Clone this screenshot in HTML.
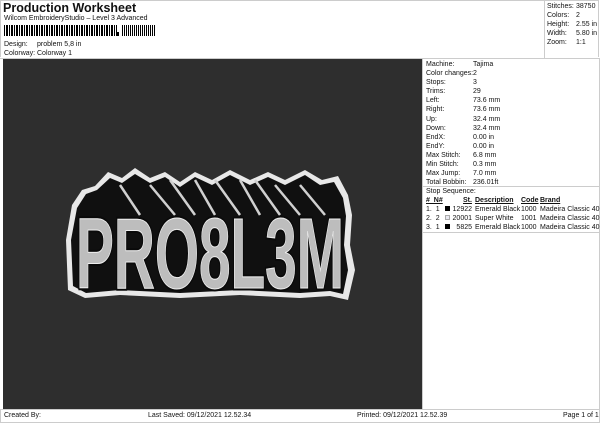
<!DOCTYPE html>
<html><head><style>
body{margin:0;width:600px;height:424px;background:#fff;font-family:"Liberation Sans",sans-serif;color:#111;position:relative;overflow:hidden}
.a{position:absolute;white-space:nowrap;font-size:7px}
.t{font-size:7px;line-height:9.1px}
</style></head><body>
<div class="a" style="left:3px;top:1px;font-size:12.5px;font-weight:bold">Production Worksheet</div>
<div class="a" style="left:4px;top:15px">Wilcom EmbroideryStudio – Level 3 Advanced</div>
<div class="a" style="left:4px;top:25px;width:113px;height:11px;background:repeating-linear-gradient(90deg,#000 0 1px,#fff 1px 2px,#000 2px 4px,#fff 4px 5px)"></div>
<div class="a" style="left:117px;top:32px;width:2px;height:4px;background:#000"></div>
<div class="a" style="left:122px;top:25px;width:33px;height:11px;background:repeating-linear-gradient(90deg,#000 0 1px,#fff 1px 2px,#000 2px 3px,#fff 3px 4px)"></div>
<div class="a" style="left:4px;top:41px">Design:</div><div class="a" style="left:37px;top:41px">problem 5,8 in</div>
<div class="a" style="left:4px;top:50px">Colorway:</div><div class="a" style="left:37px;top:50px">Colorway 1</div>
<div class="a" style="left:0;top:0;width:599px;height:57px;border:1px solid #ccc;border-bottom:none;box-sizing:border-box;"></div>
<div class="a" style="left:544px;top:0;width:1px;height:58px;background:#ccc"></div>
<div class="a t" style="left:547px;top:2px">Stitches:<br>Colors:<br>Height:<br>Width:<br>Zoom:</div>
<div class="a t" style="left:576px;top:2px">38750<br>2<br>2.55 in<br>5.80 in<br>1:1</div>
<div class="a" style="left:0;top:58px;width:600px;height:1px;background:#ccc"></div>
<div class="a" style="left:3px;top:59px;width:419px;height:350px;background:#2e2e2e"></div>
<svg class="a" style="left:3px;top:59px" width="419" height="350" viewBox="3 59 419 350">
<path d="M68,290 L66,240 L72,205 L82,190 L95,186 L108,172 L122,178 L135,168 L150,178 L165,172 L180,182 L195,172 L212,180 L230,170 L250,180 L268,172 L285,180 L305,170 L322,180 L338,176 L348,195 L352,215 L350,245 L355,270 L348,300 L330,296 L300,298 L240,295 L180,298 L120,295 L85,298 Z" fill="#e8e8e8"/>
<path d="M73,286 L71,240 L77,208 L86,194 L97,190 L110,178 L122,183 L135,174 L150,183 L165,177 L180,187 L195,177 L212,185 L230,175 L250,185 L268,177 L285,185 L305,175 L320,185 L334,182 L343,198 L346,216 L344,245 L348,270 L343,294 L330,291 L300,293 L240,290 L180,293 L120,290 L86,293 Z" fill="#101010"/>
<g stroke="#d0d0d0" stroke-width="2.5" fill="none"><path d="M120,185 L140,215 M150,185 L175,215 M170,180 L195,215 M195,180 L215,215 M215,180 L240,215 M240,180 L260,215 M255,180 L280,215 M275,185 L300,215 M300,185 L325,215"/></g>
<text x="210" y="288" text-anchor="middle" font-family="Liberation Sans" font-weight="bold" font-size="100" textLength="268" lengthAdjust="spacingAndGlyphs" fill="#bdbdbd" stroke="#0a0a0a" stroke-width="5" paint-order="stroke">PRO8L3M</text>
<text x="210" y="288" text-anchor="middle" font-family="Liberation Sans" font-weight="bold" font-size="100" textLength="268" lengthAdjust="spacingAndGlyphs" fill="none" stroke="#eee" stroke-width="1">PRO8L3M</text>
</svg>
<div class="a" style="left:422px;top:59px;width:178px;height:350px;border-left:1px solid #ccc;border-right:1px solid #ccc;box-sizing:border-box"></div>
<div class="a t" style="left:426px;top:60px">Machine:<br>Color changes:<br>Stops:<br>Trims:<br>Left:<br>Right:<br>Up:<br>Down:<br>EndX:<br>EndY:<br>Max Stitch:<br>Min Stitch:<br>Max Jump:<br>Total Bobbin:</div>
<div class="a t" style="left:473px;top:60px">Tajima<br>2<br>3<br>29<br>73.6 mm<br>73.6 mm<br>32.4 mm<br>32.4 mm<br>0.00 in<br>0.00 in<br>6.8 mm<br>0.3 mm<br>7.0 mm<br>236.01ft</div>
<div class="a" style="left:423px;top:186px;width:176px;height:1px;background:#ccc"></div>
<div class="a t" style="left:426px;top:187px">Stop Sequence:</div>
<div class="a t" style="left:426px;top:196px;font-weight:bold;text-decoration:underline">#&nbsp; N#</div>
<div class="a t" style="left:463px;top:196px;font-weight:bold;text-decoration:underline">St.</div>
<div class="a t" style="left:475px;top:196px;font-weight:bold;text-decoration:underline">Description</div>
<div class="a t" style="left:521px;top:196px;font-weight:bold;text-decoration:underline">Code</div>
<div class="a t" style="left:540px;top:196px;font-weight:bold;text-decoration:underline">Brand</div>
<div class="a t" style="left:426px;top:205px">1.&nbsp; 1<br>2.&nbsp; 2<br>3.&nbsp; 1</div>
<div class="a" style="left:445px;top:206px;width:5px;height:5px;background:#000"></div>
<div class="a" style="left:445px;top:215px;width:5px;height:5px;background:#e8e8f0;border:1px solid #aaa;box-sizing:border-box"></div>
<div class="a" style="left:445px;top:224px;width:5px;height:5px;background:#000"></div>
<div class="a t" style="left:452px;top:205px;width:20px;text-align:right">12922<br>20001<br>5825</div>
<div class="a t" style="left:475px;top:205px">Emerald Black<br>Super White<br>Emerald Black</div>
<div class="a t" style="left:521px;top:205px">1000<br>1001<br>1000</div>
<div class="a t" style="left:540px;top:205px">Madeira Classic 40<br>Madeira Classic 40<br>Madeira Classic 40</div>
<div class="a" style="left:423px;top:232px;width:176px;height:1px;background:#ccc"></div>
<div class="a" style="left:0;top:409px;width:600px;height:14px;border:1px solid #ccc;box-sizing:border-box"></div>
<div class="a" style="left:4px;top:412px">Created By:</div>
<div class="a" style="left:148px;top:412px">Last Saved: 09/12/2021 12.52.34</div>
<div class="a" style="left:357px;top:412px">Printed: 09/12/2021 12.52.39</div>
<div class="a" style="left:563px;top:412px">Page 1 of 1</div>
</body></html>
